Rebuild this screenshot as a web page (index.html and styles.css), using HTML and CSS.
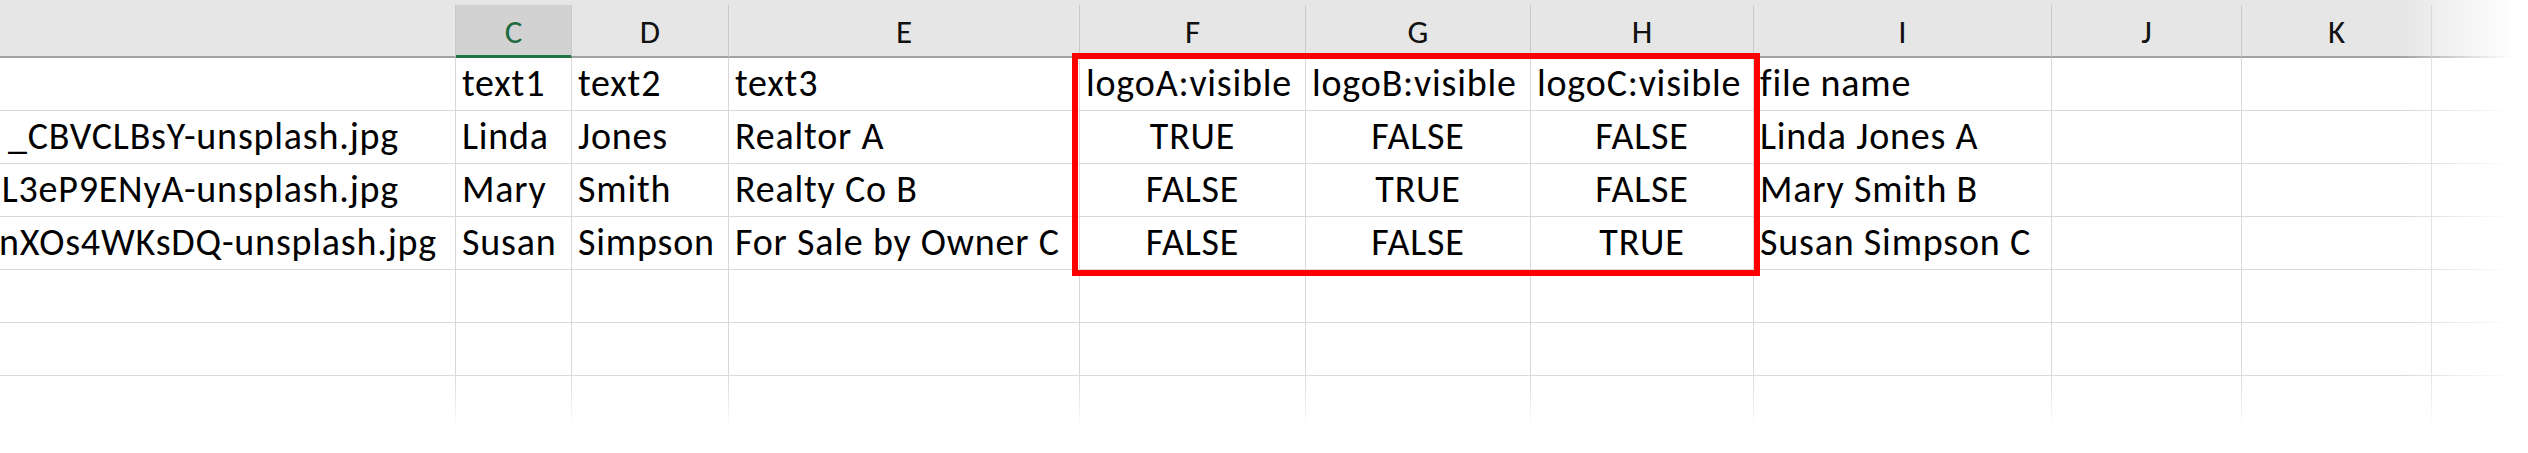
FILE: index.html
```html
<!DOCTYPE html>
<html lang="en">
<head>
<meta charset="utf-8">
<title>Sheet</title>
<link rel="stylesheet" href="styles.css">
</head>
<body>
<div class="sheet">
  <div class="grid">
    <div class="hd"></div>
    <div class="hd sel">C</div>
    <div class="hd">D</div>
    <div class="hd">E</div>
    <div class="hd">F</div>
    <div class="hd">G</div>
    <div class="hd">H</div>
    <div class="hd">I</div>
    <div class="hd">J</div>
    <div class="hd">K</div>
    <div class="hd last"></div>

    <div class="c"></div>
    <div class="c">text1</div>
    <div class="c">text2</div>
    <div class="c">text3</div>
    <div class="c">logoA:visible</div>
    <div class="c">logoB:visible</div>
    <div class="c">logoC:visible</div>
    <div class="c">file name</div>
    <div class="c"></div>
    <div class="c"></div>
    <div class="c last"></div>

    <div class="c fn fn-a"><span>_CBVCLBsY-unsplash.jpg</span></div>
    <div class="c">Linda</div>
    <div class="c">Jones</div>
    <div class="c">Realtor A</div>
    <div class="c ctr">TRUE</div>
    <div class="c ctr">FALSE</div>
    <div class="c ctr">FALSE</div>
    <div class="c">Linda Jones A</div>
    <div class="c"></div>
    <div class="c"></div>
    <div class="c last"></div>

    <div class="c fn fn-b"><span>L3eP9ENyA-unsplash.jpg</span></div>
    <div class="c">Mary</div>
    <div class="c">Smith</div>
    <div class="c">Realty Co B</div>
    <div class="c ctr">FALSE</div>
    <div class="c ctr">TRUE</div>
    <div class="c ctr">FALSE</div>
    <div class="c">Mary Smith B</div>
    <div class="c"></div>
    <div class="c"></div>
    <div class="c last"></div>

    <div class="c fn fn-c"><span>nXOs4WKsDQ-unsplash.jpg</span></div>
    <div class="c">Susan</div>
    <div class="c">Simpson</div>
    <div class="c">For Sale by Owner C</div>
    <div class="c ctr">FALSE</div>
    <div class="c ctr">FALSE</div>
    <div class="c ctr">TRUE</div>
    <div class="c">Susan Simpson C</div>
    <div class="c"></div>
    <div class="c"></div>
    <div class="c last"></div>

    <div class="c"></div><div class="c"></div><div class="c"></div><div class="c"></div><div class="c"></div><div class="c"></div><div class="c"></div><div class="c"></div><div class="c"></div><div class="c"></div><div class="c last"></div>
    <div class="c"></div><div class="c"></div><div class="c"></div><div class="c"></div><div class="c"></div><div class="c"></div><div class="c"></div><div class="c"></div><div class="c"></div><div class="c"></div><div class="c last"></div>
    <div class="c"></div><div class="c"></div><div class="c"></div><div class="c"></div><div class="c"></div><div class="c"></div><div class="c"></div><div class="c"></div><div class="c"></div><div class="c"></div><div class="c last"></div>
  </div>
  <div class="highlight"></div>
  <div class="fade-right"></div>
  <div class="fade-bottom"></div>
</div>
</body>
</html>
```

FILE: styles.css
```css
html, body {
  margin: 0;
  padding: 0;
  background: #ffffff;
}

.sheet {
  position: relative;
  width: 2528px;
  height: 453px;
  overflow: hidden;
  font-family: Carlito, Lato, "Open Sans", sans-serif;
  color: #000000;
}

.grid {
  display: grid;
  grid-template-columns: 456px 116px 157px 351px 226px 225px 223px 298px 190px 190px 1fr;
  grid-template-rows: 58px repeat(7, 53px);
  background: linear-gradient(#e6e6e6 0, #e6e6e6 58px, #ffffff 58px);
}

.hd {
  margin-top: 5px;
  box-sizing: border-box;
  background: #e6e6e6;
  border-right: 1px solid #c9c9c9;
  border-bottom: 2px solid #a3a3a3;
  display: flex;
  justify-content: center;
  align-items: flex-end;
  padding-bottom: 7px;
  font-size: 33px;
  line-height: 1;
  color: #111111;
}

.hd.sel {
  background: #d2d2d2;
  color: #1d6b40;
  border-bottom: 3px solid #217346;
  padding-bottom: 6px;
}

.hd.last,
.c.last {
  border-right: none;
}

.c {
  box-sizing: border-box;
  border-right: 1px solid #d8d8d8;
  border-bottom: 1px solid #d8d8d8;
  display: flex;
  align-items: flex-end;
  padding: 0 0 8px 6px;
  font-size: 38px;
  letter-spacing: 0.8px;
  line-height: 1;
  white-space: nowrap;
  overflow: hidden;
}

.c.ctr {
  justify-content: center;
  padding-left: 0;
}

.c.fn {
  justify-content: flex-end;
  padding-left: 0;
}

.fn-a, .fn-b {
  padding-right: 56px;
}

.fn-c {
  padding-right: 18px;
}

.fn span {
  flex: none;
}

.highlight {
  position: absolute;
  left: 1072px;
  top: 53px;
  width: 688px;
  height: 223px;
  box-sizing: border-box;
  border: 6px solid #ff0000;
}

.fade-right {
  position: absolute;
  top: 0;
  right: 0;
  width: 128px;
  height: 100%;
  background: linear-gradient(to right, rgba(255,255,255,0) 0, #ffffff 88%);
}

.fade-bottom {
  position: absolute;
  left: 0;
  bottom: 0;
  width: 100%;
  height: 80px;
  background: linear-gradient(to bottom, rgba(255,255,255,0) 0, #ffffff 70%);
}
```
